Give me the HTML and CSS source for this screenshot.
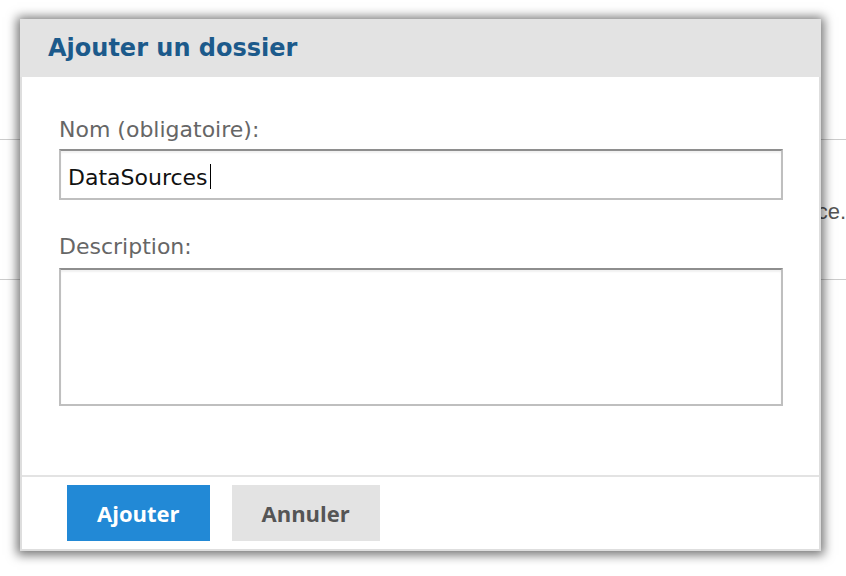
FILE: index.html
```html
<!DOCTYPE html>
<html lang="fr">
<head>
<meta charset="utf-8">
<title>Ajouter un dossier</title>
<link rel="stylesheet" href="styles.css">
</head>
<body>
<div class="page">
  <div class="page-row">
    <p class="page-text">Aucun dossier n’a encore été créé dans cet espace.</p>
  </div>
</div>

<div class="dialog" role="dialog" aria-labelledby="dlg-title">
  <div class="dialog-header">
    <h2 id="dlg-title" class="dialog-title">Ajouter un dossier</h2>
  </div>
  <div class="dialog-main">
    <div class="dialog-body">
      <div class="form-group">
        <label class="form-label">Nom (obligatoire):</label>
        <div class="field field-input"><span class="field-value">DataSources</span><span class="caret"></span></div>
      </div>
      <div class="form-group form-group-desc">
        <label class="form-label form-label-desc">Description:</label>
        <div class="field field-area"></div>
      </div>
    </div>
    <div class="dialog-footer">
      <button class="btn btn-primary" type="button">Ajouter</button>
      <button class="btn btn-secondary" type="button">Annuler</button>
    </div>
  </div>
</div>
</body>
</html>
```

FILE: styles.css
```css
html, body {
  margin: 0;
  padding: 0;
  overflow: hidden;
  background: #ffffff;
  width: 846px;
  height: 576px;
}

body {
  font-family: "DejaVu Sans", Verdana, sans-serif;
}

/* background page */
.page {
  padding-top: 139px;
}

.page-row {
  height: 139px;
  border-top: 1px solid #cccccc;
  border-bottom: 1px solid #cccccc;
  display: flex;
  align-items: center;
  justify-content: flex-end;
}

.page-text {
  margin: 4px 0 0 0;
  font-family: "Liberation Sans", Arial, sans-serif;
  font-size: 22px;
  color: #555555;
  white-space: nowrap;
}

/* dialog */
.dialog {
  position: absolute;
  left: 20px;
  top: 19px;
  width: 801px;
  height: 532px;
  display: flex;
  flex-direction: column;
  background: #ffffff;
  box-shadow: 0 1px 10px 3px rgba(0, 0, 0, 0.55);
}

.dialog-header {
  height: 58px;
  flex: 0 0 58px;
  background: #e3e3e3;
  display: flex;
  align-items: center;
  padding-left: 28px;
}

.dialog-title {
  margin: 0;
  font-family: "DejaVu Sans", Verdana, sans-serif;
  font-weight: bold;
  font-size: 24px;
  line-height: 28px;
  color: #1c5a8b;
}

.dialog-main {
  flex: 1;
  display: flex;
  flex-direction: column;
  border: 2px solid #dedede;
  border-top: none;
}

.dialog-body {
  padding: 40px 36px 69px 37px;
}

.form-group {
  display: flex;
  flex-direction: column;
}

.form-group-desc {
  margin-top: 34px;
}

.form-label {
  font-size: 22px;
  line-height: 26px;
  color: #666666;
  margin-bottom: 6px;
}

.form-label-desc {
  margin-bottom: 8px;
}

.field {
  box-sizing: border-box;
  width: 724px;
  border: 2px solid #bfbfbf;
  border-top-color: #8e8e8e;
  box-shadow: inset 0 2px 2px rgba(0, 0, 0, 0.06);
  background: #ffffff;
}

.field-input {
  height: 51px;
  display: flex;
  align-items: center;
  padding-left: 7px;
  padding-top: 5px;
  font-size: 22px;
  color: #111111;
}

.caret {
  display: inline-block;
  width: 1.5px;
  height: 25px;
  background: #000000;
  margin-left: 2px;
  margin-bottom: 1px;
}

.field-area {
  height: 138px;
}

.dialog-footer {
  border-top: 2px solid #e3e3e3;
  padding: 8px 45px;
  display: flex;
  gap: 22px;
}

.btn {
  height: 56px;
  padding: 0 30px;
  border: none;
  font-family: "Open Sans", "DejaVu Sans", sans-serif;
  font-weight: bold;
  font-size: 22px;
  cursor: pointer;
}

.btn-primary {
  background: #2289d6;
  color: #ffffff;
}

.btn-secondary {
  background: #e3e3e3;
  color: #555555;
}
```
